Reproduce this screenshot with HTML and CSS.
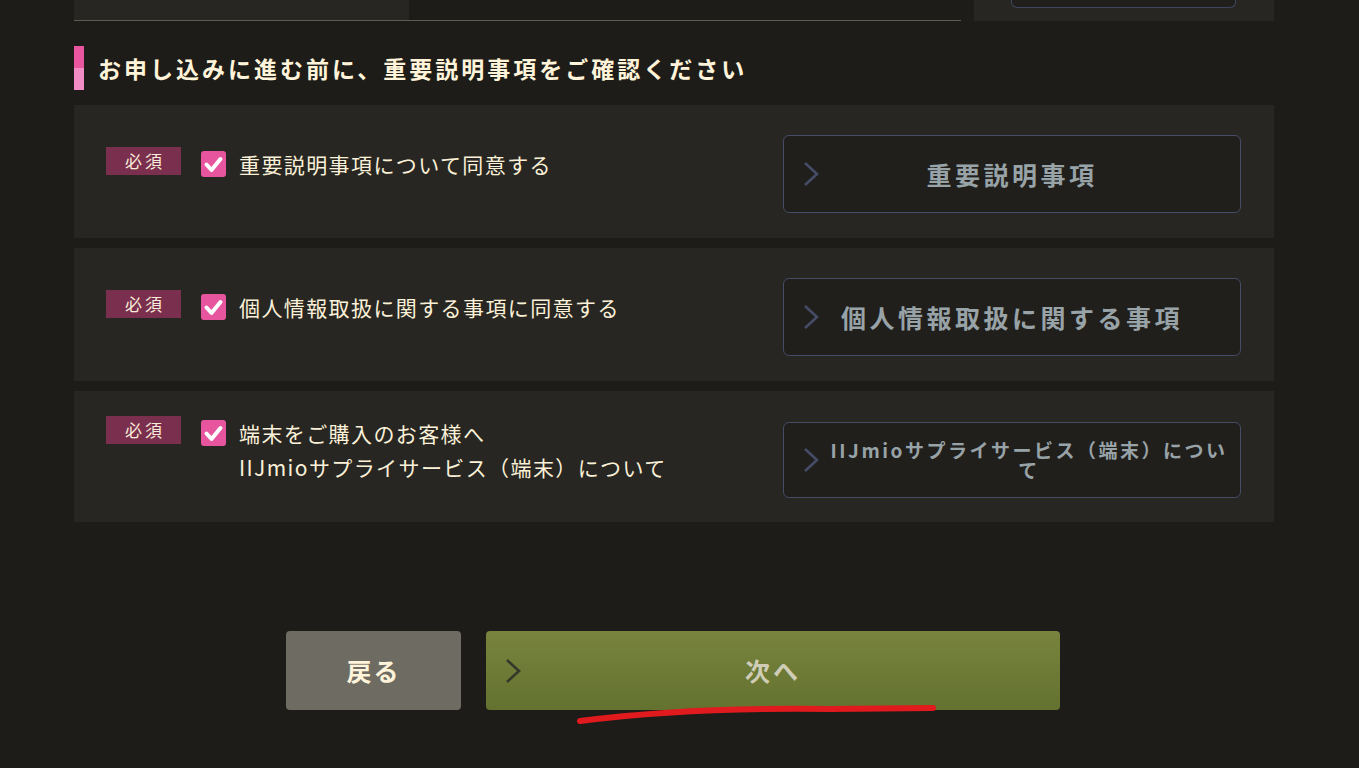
FILE: index.html
```html
<!DOCTYPE html>
<html lang="ja">
 <head>
  <title>重要説明事項の確認</title>
  <meta charset="UTF-8">
  <link rel="stylesheet" href="styles.css">
 </head>
 <body>

 <div class="page">

  <div class="top-row">
   <div class="top-left">
    <div class="top-left-panel"></div>
   </div>
   <div class="top-right">
    <div class="top-right-btn"></div>
   </div>
  </div>

  <h2 class="heading">お申し込みに進む前に、重要説明事項をご確認ください</h2>

  <div class="agree-box">
   <div class="agree-left">
    <span class="badge">必須</span>
    <span class="check"><svg viewBox="0 0 25 26" width="25" height="26"><path d="M5.5 13.5 L10.5 19 L19.5 8" fill="none" stroke="#fff" stroke-width="4" stroke-linecap="round" stroke-linejoin="round"/></svg></span>
    <p class="agree-text">重要説明事項について同意する</p>
   </div>
   <a class="doc-btn"><svg class="chev" viewBox="0 0 16 26" width="16" height="26"><path d="M2 2 L14 13 L2 24" fill="none" stroke="#454c66" stroke-width="2.6"/></svg>重要説明事項</a>
  </div>

  <div class="agree-box">
   <div class="agree-left">
    <span class="badge">必須</span>
    <span class="check"><svg viewBox="0 0 25 26" width="25" height="26"><path d="M5.5 13.5 L10.5 19 L19.5 8" fill="none" stroke="#fff" stroke-width="4" stroke-linecap="round" stroke-linejoin="round"/></svg></span>
    <p class="agree-text">個人情報取扱に関する事項に同意する</p>
   </div>
   <a class="doc-btn"><svg class="chev" viewBox="0 0 16 26" width="16" height="26"><path d="M2 2 L14 13 L2 24" fill="none" stroke="#454c66" stroke-width="2.6"/></svg>個人情報取扱に関する事項</a>
  </div>

  <div class="agree-box last">
   <div class="agree-left">
    <span class="badge">必須</span>
    <span class="check"><svg viewBox="0 0 25 26" width="25" height="26"><path d="M5.5 13.5 L10.5 19 L19.5 8" fill="none" stroke="#fff" stroke-width="4" stroke-linecap="round" stroke-linejoin="round"/></svg></span>
    <p class="agree-text">端末をご購入のお客様へ<br>IIJmioサプライサービス（端末）について</p>
   </div>
   <a class="doc-btn long"><svg class="chev" viewBox="0 0 16 26" width="16" height="26"><path d="M2 2 L14 13 L2 24" fill="none" stroke="#454c66" stroke-width="2.6"/></svg>IIJmioサプライサービス（端末）について</a>
  </div>

  <div class="nav-row">
   <a class="btn-back">戻る</a>
   <a class="btn-next"><svg class="chev" viewBox="0 0 16 26" width="16" height="26"><path d="M2 2 L14 13 L2 24" fill="none" stroke="#34372a" stroke-width="2.6"/></svg>次へ</a>
  </div>

 </div>

 <svg class="scribble" width="1359" height="768" viewBox="0 0 1359 768">
  <path d="M580 721 Q 690 707 830 709 L 933 708" fill="none" stroke="#e01a1d" stroke-width="6" stroke-linecap="round"/>
 </svg>

 </body>
</html>
```

FILE: styles.css
```css
body { margin: 0; background: #1d1c19; font-family: "Noto Sans CJK JP", "Noto Sans", sans-serif; color: #fbf1d8; }
.page { width: 1200px; margin-left: 74px; padding-bottom: 58px; }

.top-row { display: flex; height: 21px; }
.top-left { width: 887px; height: 20px; border-bottom: 1px solid #5c5a52; }
.top-left-panel { width: 335px; height: 20px; background: #272622; }
.top-right { margin-left: 13px; width: 300px; height: 21px; background: #272622; }
.top-right-btn { margin-left: 37px; width: 223px; height: 7px; border: 1px solid #3f4760; border-top: none; border-radius: 0 0 6px 6px; background: #211f1c; }

.heading { margin: 25px 0 15px; height: 44px; display: flex; align-items: center; padding-left: 14px; font-size: 23px; letter-spacing: 3px; font-weight: bold; color: #fff4da; border-left: 10px solid #e8559f; border-image: linear-gradient(#e9559f 50%, #f28cc4 50%) 1; }

.agree-box { display: flex; align-items: center; justify-content: space-between; background: #272622; padding: 30px 33px 25px 32px; margin-bottom: 10px; }
.agree-box.last { padding: 31px 33px 24px 32px; }
.agree-box.last .doc-btn { height: 76px; }
.agree-left { display: flex; align-items: flex-start; margin-top: -20px; }
.badge { width: 75px; height: 28px; line-height: 28px; background: #7b2f4e; color: #f8ead8; font-size: 17px; letter-spacing: 3px; text-indent: 3px; text-align: center; }
.check { margin: 4px 13px 0 20px; width: 25px; height: 26px; border-radius: 3px; background: #e8559f; display: flex; }
.agree-text { margin: 0; font-size: 21px; line-height: 34px; letter-spacing: 1.4px; color: #fbf1d8; }

.doc-btn { position: relative; box-sizing: border-box; width: 458px; height: 78px; display: flex; align-items: center; justify-content: center; text-align: center; padding: 0 20px; border: 1px solid #454c65; border-radius: 6px; background: #211f1c; color: #98a3a8; font-size: 25px; font-weight: bold; letter-spacing: 3.5px; }
.doc-btn.long { padding: 0 10px 0 44px; font-size: 19px; letter-spacing: 2.5px; line-height: 20px; }
.chev { position: absolute; left: 19px; top: 50%; margin-top: -13px; }

.nav-row { display: flex; gap: 25px; margin: 109px 0 0 212px; }
.btn-back { width: 175px; height: 79px; display: flex; align-items: center; justify-content: center; background: #6e6c62; border-radius: 4px; color: #fff4da; font-size: 25px; font-weight: bold; letter-spacing: 2px; padding-bottom: 2px; box-sizing: border-box; }
.btn-next { position: relative; width: 574px; height: 79px; display: flex; align-items: center; justify-content: center; background: linear-gradient(#78843d, #647230); border-radius: 4px; color: #d0cdb6; font-size: 25px; font-weight: bold; letter-spacing: 3px; padding-bottom: 2px; box-sizing: border-box; }

.scribble { position: absolute; left: 0; top: 0; pointer-events: none; }
```
